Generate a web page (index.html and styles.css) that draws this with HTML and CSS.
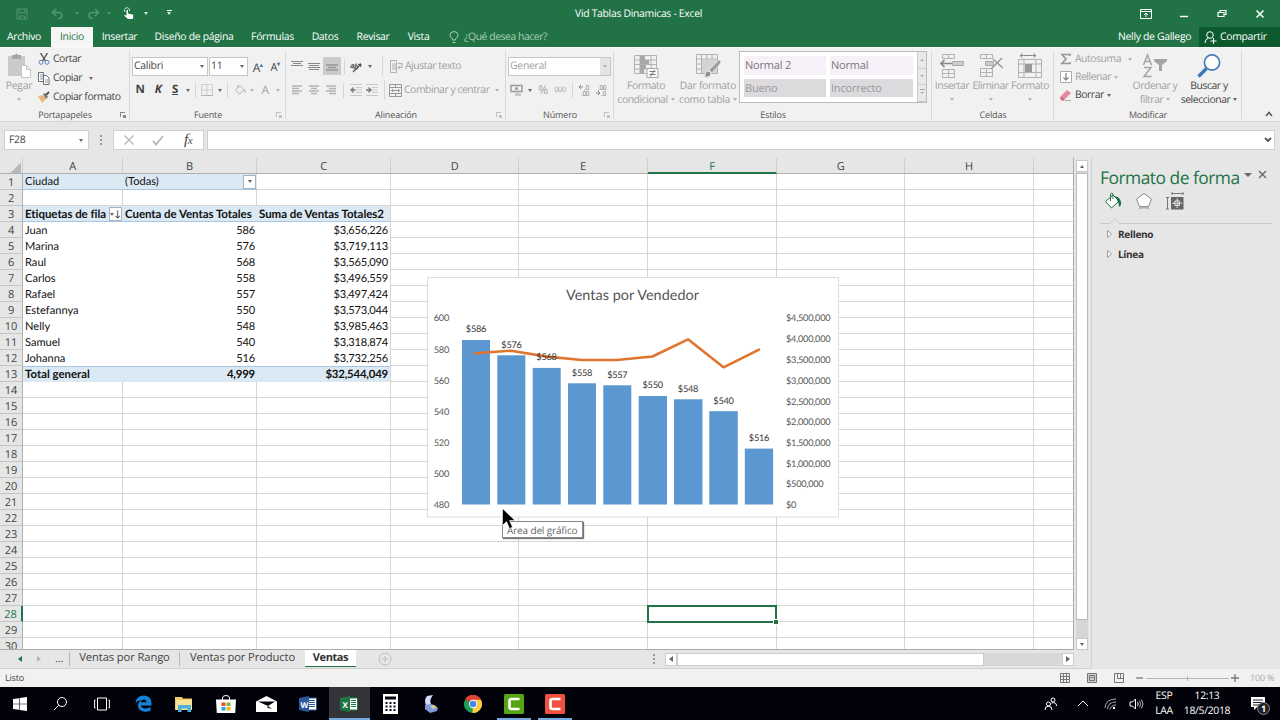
FILE: index.html
```html
<!DOCTYPE html>
<html lang="es">
  <head>
    <meta charset="UTF-8" />
    <meta name="viewport" content="width=device-width, initial-scale=1.0" />
    <title>Vid Tablas Dinamicas - Excel</title>
    <link rel="stylesheet" href="styles.css">
  </head>

  <body>
    <!--Barra de título-->
    <header class="titlebar">
      <div class="quick">
        <svg class="dim" width="12" height="12" viewBox="0 0 12 12"><path d="M1 1h10v10H1zM3 1v4h6V1M3.500 11V8h5v3" /></svg>
        <svg class="dim" width="13" height="12" viewBox="0 0 13 12"><path d="M5 1L1.500 4.500L5 8M2 4.500h6a3 3 0 0 1 0 6H7" stroke-width="1.600" /></svg>
        <i class="arrow dim-arrow"></i>
        <svg class="dim" width="13" height="12" viewBox="0 0 13 12"><path d="M8 1l3.500 3.500L8 8M11 4.500H5a3 3 0 0 0 0 6h1" stroke-width="1.600" /></svg>
        <i class="arrow dim-arrow"></i>
        <svg width="12" height="13" viewBox="0 0 12 13"><path d="M2 5a2.600 2.600 0 1 1 4.500-1" stroke="#d5eadc" fill="none" /><path d="M3.500 3.200q.8-1 1.500 0V6.500l4.500 1q1 .4.800 1.500L9.800 12H5L1 8.500q.8-1.200 2.500 0z" fill="#fff" /></svg>
        <i class="arrow"></i>
        <i class="arrow more"></i>
      </div>
      <div class="doc-title">Vid Tablas Dinamicas - Excel</div>
      <div class="win-buttons">
        <svg width="12" height="10" viewBox="0 0 12 10"><path d="M.5.500h11v9H.5zM.5 2.500h11M6 8V4.200M4 6l2-2 2 2" /></svg>
        <svg width="10" height="10" viewBox="0 0 10 10"><path d="M1 7.500h8" stroke-width="1.400" /></svg>
        <svg width="10" height="10" viewBox="0 0 10 10"><path d="M1 3.500h6v4H1zM3 3.500v-2h6v4H7" stroke-width="1.200" /></svg>
        <svg width="10" height="10" viewBox="0 0 10 10"><path d="M1.500 1.500l7 7M8.500 1.500l-7 7" stroke-width="1.500" /></svg>
      </div>
    </header>

    <!--Pestañas-->
    <nav class="tabs">
      <span class="tab">Archivo</span>
      <span class="tab active">Inicio</span>
      <span class="tab">Insertar</span>
      <span class="tab">Diseño de página</span>
      <span class="tab">Fórmulas</span>
      <span class="tab">Datos</span>
      <span class="tab">Revisar</span>
      <span class="tab">Vista</span>
      <span class="tell-me">
        <svg width="10" height="13" viewBox="0 0 10 13"><path d="M3.500 9V8Q1 6 1 4.500a4 4 0 0 1 8 0Q9 6 6.500 8v1zM3.500 11.500h3" /></svg>
        ¿Qué desea hacer?
      </span>
      <span class="user">Nelly de Gallego</span>
      <span class="share">
        <svg width="13" height="13" viewBox="0 0 13 13"><circle cx="6" cy="4" r="3.300" /><path d="M1 12q0-4 3.500-5M6.500 10h6M9.500 7v6" /></svg>
        Compartir
      </span>
    </nav>

    <!--Cinta de opciones-->
    <section class="ribbon">
      <div class="group clipboard">
        <div class="content">
          <div class="big off">
            <svg width="26" height="27" viewBox="0 0 26 27"><path d="M2 4h17v20H2z" fill="#cbc9cc" /><path d="M6 7V3h3q1-3 3 0h3v4z" fill="#a7a5a8" /><path d="M15.500 13.500h5l4 4v8h-9z" fill="#fff" stroke="#c4c2c4" /><path d="M20.500 13.500v4h4" fill="none" stroke="#c4c2c4" /></svg>
            <span>Pegar</span>
            <i class="arrow"></i>
          </div>
          <div class="stack">
            <div class="cmd"><svg width="12" height="12" viewBox="0 0 12 12"><path d="M2.500 0L7.500 8M9.500 0L4.500 8" stroke="#555" stroke-width="1.400" /><circle cx="3" cy="9.300" r="2" fill="none" stroke="#5a86bd" /><circle cx="9" cy="9.300" r="2" fill="none" stroke="#5a86bd" /></svg>Cortar</div>
            <div class="cmd"><svg width="12" height="13" viewBox="0 0 12 13"><path d="M.5.500h5v9h-5zM5.500 3.500h3l2.500 2.500v6.500H5.500z" fill="#fff" stroke="#707070" /><path d="M2 3h3M2 5h3M2 7h3M7 8h3M7 10h3" stroke="#7e9cc0" /></svg>Copiar<i class="arrow wide"></i></div>
            <div class="cmd"><svg width="12" height="12" viewBox="0 0 12 12"><path d="M0 5l5-1 3 4-4 4z" fill="#ecb878" /><path d="M5 3l2-1 3 4-2 2z" fill="#777" /><path d="M8 4l3-3" stroke="#555" stroke-width="2" /></svg>Copiar formato</div>
          </div>
        </div>
        <div class="caption">Portapapeles<i class="launch"></i></div>
      </div>

      <div class="group font">
        <div class="rows">
          <div class="row font-top">
            <div class="combo">Calibri<i class="arrow"></i></div>
            <div class="combo">11<i class="arrow"></i></div>
            <span class="glyph">A<b>▴</b></span>
            <span class="glyph small">A<b>▾</b></span>
          </div>
          <div class="row font-bottom">
            <b>N</b><b><em>K</em></b><b><u>S</u></b><i class="arrow"></i><i class="line"></i>
            <svg width="12" height="12" viewBox="0 0 12 12"><path d="M.5.500h11v11H.5zM6 .5v11M.5 6h11" class="thin" stroke-dasharray="1 1" /><path d="M0 11.500h12" class="thin" /></svg>
            <i class="arrow"></i><i class="line"></i>
            <svg width="13" height="12" viewBox="0 0 13 12"><path d="M1.500 6L6 1.500 10 6 5.500 10zM4 4V1" class="thin" /><path d="M10 5q3 2 1 5z" fill="#b5b3b5" /></svg>
            <i class="arrow pale"></i><span class="glyph pale-text">A</span><i class="arrow pale"></i>
          </div>
        </div>
        <div class="caption">Fuente<i class="launch pale"></i></div>
      </div>

      <div class="group align">
        <div class="rows">
          <div class="row align-top">
            <svg width="12" height="12" viewBox="0 0 12 12"><path d="M0 1.500h12M2 3.500h8M0 5.500h12" stroke="#888" /></svg>
            <svg width="12" height="12" viewBox="0 0 12 12"><path d="M0 3.500h12M1 5.500h10M0 7.500h12M1 9.500h10" stroke="#888" /></svg>
            <span class="pressed"><svg width="12" height="12" viewBox="0 0 12 12"><path d="M0 5h12M2 7.500h8M0 10h12" stroke="#999" stroke-width="1.600" /></svg></span>
            <i class="line"></i>
            <svg width="14" height="13" viewBox="0 0 14 13"><text x="1" y="8" transform="rotate(20 3 6)" class="tiny-bold">ab</text><path d="M4 12L12 4M12 4l-3 .5M12 4l-.5 3" stroke="#555" stroke-width="1.200" /></svg>
            <i class="arrow"></i><i class="line tall"></i>
            <svg width="13" height="13" viewBox="0 0 13 13"><path d="M.5.500h6v12h-6zM8 3.500h4v4H8M10 5.500L8 7.500l2 2" class="thin" /><path d="M2 3h4v7H2z" fill="#d2d2d2" /></svg>
            <span class="off">Ajustar texto</span>
          </div>
          <div class="row align-top align-bottom">
            <svg width="12" height="10" viewBox="0 0 12 10"><path d="M1 1h10M1 3.500h7M1 6h10M1 8.500h7" class="fat" /></svg>
            <svg width="12" height="10" viewBox="0 0 12 10"><path d="M1 1h10M3 3.500h6M1 6h10M3 8.500h6" class="fat" /></svg>
            <svg width="12" height="10" viewBox="0 0 12 10"><path d="M1 1h10M4 3.500h7M1 6h10M4 8.500h7" class="fat" /></svg>
            <i class="line"></i>
            <svg width="12" height="12" viewBox="0 0 12 12"><path d="M0 .5h12M6 3.500h6M6 6h6M6 8.500h6M0 11.500h12" stroke="#c9c9c9" /><path d="M5.500 6H1M3.500 3.500L1 6l2.500 2.500" stroke="#777" fill="none" stroke-width="1.300" /></svg>
            <svg width="12" height="12" viewBox="0 0 12 12"><path d="M0 .5h12M6 3.500h6M6 6h6M6 8.500h6M0 11.500h12" stroke="#c9c9c9" /><path d="M0 6h5M2.500 3.500L5 6 2.500 8.500" stroke="#777" fill="none" stroke-width="1.300" /></svg>
            <i class="line tall"></i>
            <svg width="13" height="13" viewBox="0 0 13 13"><path d="M.5.500h12v12H.5zM.5 3.500h12M.5 9.500h12M6.500.500v3M6.500 9.500v3M2.500 6.500h8M4 5L2.500 6.500 4 8M9 5l1.500 1.500L9 8" fill="none" stroke="#999" /></svg>
            <span class="off">Combinar y centrar</span><i class="arrow pale"></i>
          </div>
        </div>
        <div class="caption">Alineación<i class="launch pale"></i></div>
      </div>

      <div class="group number">
        <div class="rows">
          <div class="row"><div class="combo off general">General<i class="pick"><i class="arrow pale"></i></i></div></div>
          <div class="row number-bottom">
            <svg width="13" height="12" viewBox="0 0 13 12"><path d="M1 1.500h11v6H1z" fill="none" stroke="#999" stroke-width="1.400" /><circle cx="6.500" cy="4.500" r="1.500" fill="#999" /><path d="M5 9h6v3H5z" fill="#ccc" /></svg>
            <i class="arrow"></i><span class="off percent">%</span><span class="off zeros">000</span><i class="line"></i>
            <svg width="13" height="12" viewBox="0 0 13 12"><path d="M1 3h4M3 1L1 3l2 2" class="thin dark" /><text x="6" y="5.500" class="tiny">,0</text><text x="3" y="11.500" class="tiny">,00</text></svg>
            <svg width="13" height="12" viewBox="0 0 13 12"><text x="3" y="5.500" class="tiny">,00</text><path d="M1 9h4M3 7l2 2-2 2" class="thin dark" /><text x="6" y="11.500" class="tiny">,0</text></svg>
          </div>
        </div>
        <div class="caption">Número<i class="launch pale"></i></div>
      </div>

      <div class="group styles">
        <div class="content">
          <div class="big off">
            <svg width="26" height="26" viewBox="0 0 26 26"><path d="M1.500 2.500h22v18h-22zM1.500 7h22M1.500 11.500h22M1.500 16h22M7 2v18M18 2v18" class="thin" /><path d="M7 3h5v4H7zM7 7h9v4H7zM7 12h6v4H7zM7 16h4v4H7z" fill="#a9a7a9" /><path d="M14 15.500h11v9H14z" fill="#fafafa" stroke="#a8a6a8" /><path d="M16.500 18.500h6M16.500 21.500h6M21.500 17l-4 6.500" stroke="#777" /></svg>
            <span>Formato</span><span>condicional<i class="arrow"></i></span>
          </div>
          <div class="big off second">
            <svg width="26" height="26" viewBox="0 0 26 26"><path d="M1.500 1.500h21v19h-21zM1.500 6h21M1.500 11h21M1.500 16h21M6.500 1v19M12 1v19M17 1v19" class="thin" /><path d="M7 7h15v13H7z" fill="#d5d3d5" /><path d="M24 7q3 0 1 4l-8 9-3-3z" fill="#a09ea0" stroke="#f1f1f1" stroke-width=".6" /><path d="M13 18q3 0 3 3-1 4-8 3 3-1 2-3 1-3 3-3z" fill="#8f8d8f" stroke="#eee" /></svg>
            <span>Dar formato</span><span>como tabla<i class="arrow"></i></span>
          </div>
          <div class="gallery">
            <div class="swatches">
              <span>Normal 2</span><span>Normal</span>
              <span class="grey">Bueno</span><span class="grey">Incorrecto</span>
            </div>
            <div class="spin"><i><i class="arrow up"></i></i><i><i class="arrow"></i></i><i><i class="arrow more"></i></i></div>
          </div>
        </div>
        <div class="caption">Estilos</div>
      </div>

      <div class="group cells">
        <div class="content">
          <div class="big off">
            <svg width="26" height="26" viewBox="0 0 26 26"><path d="M3.500 1.500h12v4h-12zM9.500 1.500v4M3.500 16.500h12v8h-12zM9.500 16.500v8M3.500 20.500h12" class="thin" /><path d="M13.500 8.500h11v4h-11z" fill="#ccc" stroke="#aaa" /><path d="M13 10.500H2M5.500 7L2 10.500 5.500 14" stroke="#888" stroke-width="1.700" fill="none" /></svg>
            <span>Insertar</span><i class="arrow"></i>
          </div>
          <div class="big off">
            <svg width="26" height="26" viewBox="0 0 26 26"><path d="M2.500 1.500h12v4h-12zM8.500 1.500v4M2.500 15.500h12v8h-12zM8.500 15.500v8M2.500 19.500h12" class="thin" /><path d="M7.500 8.500h8v4h-8z" fill="#ccc" stroke="#aaa" /><path d="M15 6l10 9M24 5l-11 11" stroke="#999" stroke-width="1.500" /></svg>
            <span>Eliminar</span><i class="arrow"></i>
          </div>
          <div class="big off">
            <svg width="26" height="26" viewBox="0 0 26 26"><path d="M3 2.500h16M5.500.500L3 2.500l2.500 2M16.500.500l2.500 2-2.500 2" stroke="#888" fill="none" /><path d="M1.500 6.500h23v18h-23zM1.500 11h23M1.500 19.500h23M7 6.500v18M19 6.500v18" class="thin" /><path d="M8 11h7v8H8z" fill="#999" /></svg>
            <span>Formato</span><i class="arrow"></i>
          </div>
        </div>
        <div class="caption">Celdas</div>
      </div>

      <div class="group edit">
        <div class="content">
          <div class="stack">
            <div class="cmd off"><svg width="12" height="12" viewBox="0 0 12 12"><path d="M10 3V1.500H2L6 6l-4 4.500h8V9" stroke="#999" stroke-width="1.700" fill="none" /></svg>Autosuma<i class="arrow wide"></i></div>
            <div class="cmd off"><svg width="12" height="12" viewBox="0 0 12 12"><path d="M.5.500h11v11H.5z" fill="#fff" stroke="#aaa" /><path d="M6 2v7M3.500 6.500L6 9l2.500-2.500" stroke="#888" stroke-width="1.300" fill="none" /></svg>Rellenar<i class="arrow"></i></div>
            <div class="cmd"><svg width="12" height="12" viewBox="0 0 12 12"><path d="M1 7l6-6 4 3-6 6z" fill="#e58a9c" /><path d="M1 7l4 3-1 1.500H1.500L0 9z" fill="#d0667c" /><path d="M5 11.500h6" stroke="#aaa" /></svg>Borrar<i class="arrow"></i></div>
          </div>
          <div class="big off">
            <svg width="26" height="26" viewBox="0 0 26 26"><path d="M1.500 12L5.500 2l4 10M3 8.500h5M2 14.500h7L2 23.500h7.500" stroke="#a5a5a5" stroke-width="1.500" fill="none" /><path d="M12 6h13v2l-5 4v6h-3v-6l-5-4z" fill="#a5a3a5" /></svg>
            <span>Ordenar y</span><span>filtrar<i class="arrow"></i></span>
          </div>
          <div class="big find">
            <svg width="26" height="26" viewBox="0 0 26 26"><circle cx="16" cy="9.500" r="7.600" fill="#fff" stroke="#4a7ebb" stroke-width="1.700" /><path d="M10.500 15.500L2.500 23.500" stroke="#3d76bd" stroke-width="3.300" /></svg>
            <span>Buscar y</span><span>seleccionar<i class="arrow"></i></span>
          </div>
        </div>
        <div class="caption">Modificar</div>
      </div>
      <svg class="collapse" width="8" height="6" viewBox="0 0 8 6"><path d="M1 5l3-3.500L7 5" /></svg>
    </section>

    <!--Barra de fórmulas-->
    <section class="formula-bar">
      <div class="name-box">F28<i class="arrow"></i></div>
      <i class="dots"></i>
      <div class="fx-box">
        <svg width="12" height="12" viewBox="0 0 12 12"><path d="M1.500 1.500l9 9M10.500 1.500l-9 9" stroke="#b5b5b5" stroke-width="1.300" /></svg>
        <svg width="12" height="12" viewBox="0 0 12 12"><path d="M1 7l3 3.500L11 2" stroke="#b5b5b5" stroke-width="1.800" fill="none" /></svg>
        <span class="fx">f<small>x</small></span>
      </div>
      <div class="formula"><svg width="8" height="6" viewBox="0 0 8 6"><path d="M1 1l3 3 3-3" stroke="#555" stroke-width="1.800" fill="none" /></svg></div>
    </section>

    <main class="work">
      <section class="book">
        <div class="sheet">
          <div class="col-heads">
            <span class="corner"></span><span>A</span><span>B</span><span>C</span><span>D</span><span>E</span><span class="sel">F</span><span>G</span><span>H</span><span></span>
          </div>
          <div class="body">
            <div class="row-heads">
              <span>1</span><span>2</span><span>3</span><span>4</span><span>5</span><span>6</span><span>7</span><span>8</span><span>9</span><span>10</span>
              <span>11</span><span>12</span><span>13</span><span>14</span><span>15</span><span>16</span><span>17</span><span>18</span><span>19</span><span>20</span>
              <span>21</span><span>22</span><span>23</span><span>24</span><span>25</span><span>26</span><span>27</span><span class="sel">28</span><span>29</span><span>30</span>
            </div>
            <div class="cells-area">
              <!--Tabla dinámica-->
              <div class="pivot">
                <div class="prow filter"><span>Ciudad</span><span>(Todas)<i class="drop"><i class="arrow"></i></i></span><span class="blank"></span></div>
                <div class="prow empty"></div>
                <div class="prow head"><span>Etiquetas de fila<i class="drop"><i class="arrow"></i>↓</i></span><span>Cuenta de Ventas Totales</span><span>Suma de Ventas Totales2</span></div>
                <div class="prow"><span>Juan</span><span>586</span><span>$3,656,226</span></div>
                <div class="prow"><span>Marina</span><span>576</span><span>$3,719,113</span></div>
                <div class="prow"><span>Raul</span><span>568</span><span>$3,565,090</span></div>
                <div class="prow"><span>Carlos</span><span>558</span><span>$3,496,559</span></div>
                <div class="prow"><span>Rafael</span><span>557</span><span>$3,497,424</span></div>
                <div class="prow"><span>Estefannya</span><span>550</span><span>$3,573,044</span></div>
                <div class="prow"><span>Nelly</span><span>548</span><span>$3,985,463</span></div>
                <div class="prow"><span>Samuel</span><span>540</span><span>$3,318,874</span></div>
                <div class="prow"><span>Johanna</span><span>516</span><span>$3,732,256</span></div>
                <div class="prow total"><span>Total general</span><span>4,999</span><span>$32,544,049</span></div>
              </div>

              <!--Gráfico-->
              <svg class="chart" width="413" height="241" viewBox="427 277 413 241">
                <rect x="427.500" y="277.500" width="411" height="239.500" fill="#fff" stroke="#dedede" />
                <text x="632.500" y="300" class="chart-title">Ventas por Vendedor</text>
                <g class="axis left">
                  <text x="449" y="321">600</text><text x="449" y="352.500">580</text><text x="449" y="383.500">560</text><text x="449" y="414.500">540</text>
                  <text x="449" y="446">520</text><text x="449" y="477">500</text><text x="449" y="508">480</text>
                </g>
                <g class="axis">
                  <text x="786" y="321">$4,500,000</text><text x="786" y="342">$4,000,000</text><text x="786" y="363">$3,500,000</text><text x="786" y="383.500">$3,000,000</text>
                  <text x="786" y="404.500">$2,500,000</text><text x="786" y="425">$2,000,000</text><text x="786" y="446">$1,500,000</text><text x="786" y="466.500">$1,000,000</text>
                  <text x="786" y="487">$500,000</text><text x="786" y="508">$0</text>
                </g>
                <g class="bars">
                  <rect x="462" y="340" width="28" height="164.500" /><rect x="497.300" y="355.300" width="28" height="149.200" /><rect x="532.700" y="367.900" width="28" height="136.600" />
                  <rect x="568" y="383.300" width="28" height="121.200" /><rect x="603.300" y="385.300" width="28" height="119.200" /><rect x="638.700" y="396" width="28.300" height="108.500" />
                  <rect x="674" y="399.300" width="28.500" height="105.200" /><rect x="709.300" y="411.200" width="28.500" height="93.300" /><rect x="744.800" y="448.600" width="28.300" height="55.900" />
                </g>
                <polyline points="475,353.300 511,350.700 547,356.600 582,360 617,360 652.500,356.500 688,339.300 723.500,367.300 759,349.700" />
                <g class="axis mid">
                  <text x="476" y="332">$586</text><text x="511.500" y="347.500">$576</text><text x="546.500" y="360">$568</text><text x="582" y="375.500">$558</text><text x="617.300" y="377.500">$557</text>
                  <text x="652.700" y="388">$550</text><text x="688" y="391.500">$548</text><text x="723.500" y="403.500">$540</text><text x="759" y="441">$516</text>
                </g>
              </svg>

              <div class="selection"></div>
              <div class="tooltip">Área del gráfico</div>
              <svg class="cursor" width="14" height="22" viewBox="0 0 14 22"><path d="M.5.500v17l4-4 3 7 3-1.200-3-6.800h5.500z" fill="#000" stroke="#fff" stroke-width=".6" /></svg>
            </div>
          </div>
        </div>
        <div class="vscroll"><i><i class="arrow up"></i></i><b></b><i><i class="arrow"></i></i></div>

        <!--Hojas-->
        <div class="sheet-bar">
          <div class="sheet-nav"><i class="tri left"></i><i class="tri right"></i><span>…</span></div>
          <span class="sheet-tab">Ventas por Rango</span>
          <span class="sheet-tab wide">Ventas por Producto</span>
          <span class="sheet-tab current">Ventas</span>
          <svg class="add" width="14" height="14" viewBox="0 0 14 14"><circle cx="7" cy="7" r="6" /><path d="M7 4v6M4 7h6" /></svg>
          <i class="dots"></i>
          <div class="hscroll"><i><i class="tri left"></i></i><b></b><i><i class="tri right"></i></i></div>
        </div>
      </section>

      <!--Panel de formato-->
      <aside class="pane">
        <div class="pane-title">Formato de forma<i class="arrow"></i>
          <svg width="9" height="9" viewBox="0 0 9 9"><path d="M1 1l7 7M8 1L1 8" stroke="#666" stroke-width="1.400" /></svg>
        </div>
        <div class="pane-icons">
          <svg width="18" height="18" viewBox="0 0 18 18"><path d="M1.500 9.500L9 3l6 6-7.500 7z" fill="#fff" stroke="#217346" /><path d="M6.500 9V2q1.500-2 2.500 0v5" fill="none" stroke="#217346" /><path d="M11 4q7 2 6 9l-2 2q0-3-1-5z" fill="#217346" /></svg>
          <svg width="18" height="18" viewBox="0 0 18 18"><path d="M9 1.500l7.500 5.500-3 7.500h-9L1.500 7z" fill="#fff" stroke="#888" /><path d="M4 15.500q5-2 10 0v2q-5-2-10 0z" fill="#b5b5b5" /></svg>
          <svg width="18" height="18" viewBox="0 0 18 18"><path d="M6 1.500h11M6 0v3M17 0v3M1.500 5v12M0 5.500h3M0 17h3" stroke="#777" /><path d="M5 5h12.500v12.500H5z" fill="#666" /><path d="M11.200 6.500v9.500M6.500 11.200H16" stroke="#fff" stroke-dasharray="3 1" /><path d="M9 9h4.500v4.500H9z" fill="none" stroke="#fff" stroke-width=".8" /></svg>
        </div>
        <svg class="notch" width="172" height="7" viewBox="0 0 172 7"><path d="M0 6.500h10l5-5 5 5h152" /></svg>
        <div class="pane-item"><svg width="5" height="8" viewBox="0 0 5 8"><path d="M.5.500L4.500 4l-4 3.500z" /></svg>Relleno</div>
        <div class="pane-item"><svg width="5" height="8" viewBox="0 0 5 8"><path d="M.5.500L4.500 4l-4 3.500z" /></svg>Línea</div>
      </aside>
    </main>

    <!--Barra de estado-->
    <footer class="status">
      <span>Listo</span>
      <div class="views">
        <svg width="10" height="10" viewBox="0 0 10 10"><path d="M.5.500h9v9h-9zM.5 3.500h9M.5 6.500h9M3.500.500v9M6.500.500v9" /></svg>
        <svg width="10" height="10" viewBox="0 0 10 10"><path d="M.5.500h9v9h-9zM2.500 2.500h5v5h-5zM3.500 4.500h3" fill="#ccc" /></svg>
        <svg width="10" height="10" viewBox="0 0 10 10"><path d="M.5.500h9v9h-9zM3.500.500v5M6.500.500v5M3.500 5.500h6" /></svg>
        <svg class="zoom" width="103" height="10" viewBox="0 0 103 10"><path d="M0 5h7" stroke-width="1.300" /><path d="M10 5.500h83M51.500 3v5" stroke="#b5b5b5" /><path d="M95 5h8M99 1v8" stroke-width="1.300" /></svg>
        <span class="percent-zoom">100 %</span>
      </div>
    </footer>

    <!--Barra de tareas-->
    <footer class="taskbar">
      <div class="apps">
        <span><svg width="14" height="14" viewBox="0 0 14 14"><path d="M0 2l6-.8v5.500H0zM6.600 1.100L14 0v6.700H6.600zM0 7.300h6v5.500L0 12zM6.600 7.300H14V14l-7.400-1z" fill="#fff" /></svg></span>
        <span><svg width="15" height="15" viewBox="0 0 15 15"><circle cx="9" cy="6" r="4.500" class="w" /><path d="M5.700 9.300L1 14" class="w" /></svg></span>
        <span><svg width="16" height="14" viewBox="0 0 16 14"><path d="M3.500 1h9v12h-9zM1.500 3H.6v8h.9M14.500 3h.9v8h-.9" class="w" /></svg></span>
        <span><svg width="17" height="17" viewBox="0 0 17 17"><path d="M.5 8Q1.500.500 9 .5q7.500.5 7.500 8v2H6q.5 3 4 3 3 0 5.500-1.500v3.700Q13 16.800 9.500 16.700 3 16 3 10.500 3 7 6.500 5.300 3 5 .5 8zM6 7.300h5.500Q11.500 4.500 9 4.500T6 7.300z" fill="#1583d8" fill-rule="evenodd" /></svg></span>
        <span><svg width="18" height="16" viewBox="0 0 18 16"><path d="M0 1h7l1 1.500h9V14H0z" fill="#f0cc68" /><path d="M1 4h16v10H1z" fill="#fae39b" /><path d="M3 16V9h13v7h-3.500v-3.500h-6V16z" fill="#4fb3d9" /></svg></span>
        <span><svg width="20" height="18" viewBox="0 0 20 18"><path d="M6.500 5V3q0-2.500 3.500-2.500T13.500 3v2" class="w" /><path d="M0 4.500h20l-.8 13.500H.8z" fill="#fff" /><path d="M5.500 7.500h4v3.500h-4z" fill="#e8502f" /><path d="M10.500 7.500h4v3.500h-4z" fill="#79b72f" /><path d="M5.500 12h4v3.500h-4z" fill="#2ba0e5" /><path d="M10.500 12h4v3.500h-4z" fill="#f5b51d" /></svg></span>
        <span><svg width="21" height="16" viewBox="0 0 21 16"><path d="M0 5.500L10.500 0 21 5.500V16H0z" fill="#fff" /><path d="M2 5.500h17l-7 4.500z" fill="#05060c" /><path d="M12 10l4 3-5-1.500z" fill="#05060c" /></svg></span>
        <span><svg width="18" height="16" viewBox="0 0 18 16"><path d="M9 2h8.500v12H9z" fill="#fff" stroke="#2b579a" /><path d="M10 4.500h6M10 6.500h6M10 8.500h6M10 10.500h6" stroke="#2b579a" /><path d="M0 2l10-2v16L0 14z" fill="#2b579a" /><text x="1.500" y="11.500" class="letter">W</text></svg></span>
        <span class="on"><svg width="18" height="16" viewBox="0 0 18 16"><path d="M9 2h8.500v12H9z" fill="#fff" stroke="#217346" /><path d="M11 4.500h5M11 6.500h5M11 8.500h5M11 10.500h5" stroke="#217346" /><path d="M0 2l10-2v16L0 14z" fill="#217346" /><text x="2.500" y="11.500" class="letter">X</text></svg></span>
        <span><svg width="15" height="20" viewBox="0 0 15 20"><path d="M0 0h15v20H0z" fill="#fff" /><path d="M2 2.500h11v3H2z" fill="#05060c" /><path d="M2.500 9h10M2.500 12.500h10M2.500 16h10" stroke="#05060c" stroke-width="2" stroke-dasharray="2 2" /></svg></span>
        <span><svg width="18" height="18" viewBox="0 0 18 18"><path d="M5 1l6-1Q7 5 9 9l-4 3Q1 6 5 1z" fill="#d3daf5" /><path d="M3 10l7-1 6 4-1 3-7 2-5-4z" fill="#7f9bdc" /><path d="M8 11l4-1 3 2-4 2z" fill="#d6cf8f" /></svg></span>
        <span><svg width="18" height="18" viewBox="0 0 18 18"><path d="M9 9L1.200 4.500A9 9 0 0 1 16.800 4.500z" fill="#dc4437" /><path d="M9 9L1.200 4.500A9 9 0 0 0 8.500 18L12 11z" fill="#1b9c58" /><path d="M9 9L8.500 18A9 9 0 0 0 16.800 4.500H9z" fill="#ffcd42" /><path d="M1.200 4.500A9 9 0 0 1 16.800 4.500H9v3z" fill="#dc4437" /><circle cx="9" cy="9" r="4.200" fill="#fff" /><circle cx="9" cy="9" r="3.300" fill="#4a86ea" /></svg></span>
        <span class="open"><svg width="20" height="20" viewBox="0 0 20 20"><rect width="20" height="20" rx="1.500" fill="#57a512" /><path d="M15.500 5H7.500Q5.500 5 5.500 7v6q0 2 2 2h8" stroke="#fff" stroke-width="2.600" fill="none" /></svg></span>
        <span class="open"><svg width="20" height="20" viewBox="0 0 20 20"><rect width="20" height="20" rx="1.500" fill="#f0523f" /><path d="M15.500 5H7.500Q5.500 5 5.500 7v6q0 2 2 2h8" stroke="#fff" stroke-width="2.600" fill="none" /></svg></span>
      </div>
      <div class="tray">
        <svg width="13" height="14" viewBox="0 0 13 14"><circle cx="4.500" cy="7" r="2" class="w" /><path d="M1 13q0-4 3.500-4T8 13" class="w" /><circle cx="9" cy="3" r="2" class="w" /><path d="M7.500 6q5-1.500 5 3" class="w" /></svg>
        <svg width="12" height="7" viewBox="0 0 12 7"><path d="M1 6l5-5 5 5" class="w" /></svg>
        <svg width="13" height="13" viewBox="0 0 13 13"><path d="M1 11Q1.500 2 12 2M3.500 12Q4 5 12 5M6 12.500Q7 8 12 8" class="w faint" /><circle cx="10" cy="11" r="1.200" fill="#fff" /></svg>
        <svg width="15" height="12" viewBox="0 0 15 12"><path d="M1 4h2.500l3-3v10l-3-3H1zM8.500 4q1.500 2 0 4" class="w" /><path d="M10.500 2.500q2.500 3.500 0 7M12.500 1.500q3 4.500 0 9" class="w faint" /></svg>
        <div class="two">ESP<br>LAA</div>
        <div class="two clock">12:13<br>18/5/2018</div>
        <div class="notes"><svg width="14" height="14" viewBox="0 0 14 14"><path d="M0 0h14v10H6l-3 3v-3H0z" fill="#fff" /><path d="M2 3h10M2 5.500h10M2 8h6" stroke="#222" /></svg><b>1</b></div>
      </div>
    </footer>
  </body>
</html>
```
FILE: styles.css
```css
* {
  box-sizing: border-box;
}

body {
  width: 1280px;
  height: 720px;
  margin: 0;
  overflow: hidden;
  display: flex;
  flex-direction: column;
  background-color: #e6e6e6;
  color: #444;
  font-family: "Open Sans", "Noto Sans", sans-serif;
  font-size: 10.4px;
  letter-spacing: -0.3px;
  line-height: 14px;
  white-space: nowrap;
  text-rendering: geometricPrecision;
}

svg {
  display: block;
  flex: none;
}

i {
  font-style: normal;
}

.arrow {
  display: inline-block;
  flex: none;
  border: 2.5px solid transparent;
  border-top: 3px solid #666;
  border-bottom: 0;
}

.arrow.up {
  border-top: 0;
  border-bottom: 3px solid #666;
}

.off .arrow,
.arrow.pale {
  border-top-color: #b5b5b5;
}

.thin {
  fill: none;
  stroke: #b3b1b3;
}

.thin.dark {
  stroke: #888;
}

.fat {
  stroke: #b3b3b3;
  stroke-width: 1.6;
}

.tiny {
  font-size: 6.5px;
  letter-spacing: -0.3px;
  fill: #777;
}

.tiny-bold {
  font-size: 7.5px;
  font-weight: bold;
  fill: #555;
}

.off {
  color: #a19fa1;
}

/* Barra de título */
.titlebar {
  height: 27px;
  flex: none;
  display: grid;
  grid-template-columns: 200px 1fr 162px;
  align-items: center;
  background-color: #217346;
  color: #fff;
}

.quick {
  display: grid;
  grid-template-columns: 43px 28px 12px 20px 12px 28px 5px 42px;
  justify-items: center;
  align-items: center;
}

.quick > :first-child {
  justify-self: end;
  margin-right: 15px;
}

.quick .arrow {
  border-top-color: #d9ebe0;
}

.quick .dim {
  fill: none;
  stroke: #559470;
}

.quick .dim-arrow {
  border-top-color: #559470;
}

.doc-title {
  text-align: center;
  margin-right: 41px;
}

.win-buttons {
  display: grid;
  grid-template-columns: repeat(4, 38px);
  margin-left: 9px;
  justify-items: center;
}

.win-buttons svg {
  fill: none;
  stroke: #fff;
}

/* Pestañas */
.tabs {
  height: 20px;
  flex: none;
  display: grid;
  grid-template-columns: 51px 42px 53px 96px 61px 44px 52px 39px 1fr 81px 81px;
  align-items: stretch;
  line-height: 21px;
  background-color: #217346;
  color: #fff;
}

.tab {
  text-align: center;
}

.tab:first-child {
  padding-right: 3px;
}

.active {
  background-color: #f5f5f5;
  color: #217346;
}

.tell-me {
  display: flex;
  align-items: center;
  gap: 5px;
  padding-left: 11px;
  letter-spacing: -0.45px;
  color: #a9cdb8;
}

.tell-me svg {
  fill: none;
  stroke: #a9cdb8;
}

.share {
  display: flex;
  align-items: center;
  gap: 3px;
  padding-left: 5px;
  background-color: #0e5a2f;
}

.share svg {
  fill: none;
  stroke: #fff;
}

/* Cinta de opciones */
.ribbon {
  height: 75px;
  flex: none;
  display: flex;
  border-bottom: 1px solid #d4d4d4;
  border-top: 1px solid #fafafa;
  background-color: #f1f1f1;
  letter-spacing: -0.45px;
}

.group {
  display: flex;
  flex-direction: column;
  position: relative;
}

.group::after {
  content: "";
  position: absolute;
  right: 0;
  top: 3px;
  bottom: 2px;
  width: 1px;
  background-color: #d8d8d8;
}

.clipboard {
  width: 130px;
}

.font {
  width: 156px;
}

.align {
  width: 220px;
}

.number {
  width: 108px;
}

.styles {
  width: 318px;
}

.cells {
  width: 122px;
}

.edit {
  width: 188px;
}

.content,
.rows {
  height: 60px;
  display: flex;
}

.rows {
  flex-direction: column;
  padding-top: 8px;
  gap: 4px;
}

.caption {
  display: flex;
  justify-content: center;
  font-size: 9px;
  line-height: 13px;
  letter-spacing: -0.15px;
  color: #555;
  position: relative;
}

.launch {
  position: absolute;
  right: 5px;
  top: 4px;
  width: 5px;
  height: 5px;
  border: 1px solid #888;
  border-right: 0;
  border-bottom: 0;
}

.launch::after {
  content: "";
  position: absolute;
  left: 2px;
  top: 2px;
  width: 3px;
  height: 3px;
  background-color: #888;
}

.launch.pale {
  opacity: 0.45;
}

.big {
  display: flex;
  flex-direction: column;
  align-items: center;
  padding-top: 5px;
  line-height: 13.5px;
}

.big svg {
  margin-bottom: 1px;
}

.big > .arrow {
  margin-top: 4px;
}

.big span .arrow {
  margin: 0 0 2px 3px;
}

.clipboard .big {
  width: 38px;
  padding-top: 4px;
  letter-spacing: -0.25px;
}

.stack {
  display: flex;
  flex-direction: column;
  padding-top: 2px;
}

.cmd {
  height: 18.7px;
  display: flex;
  align-items: center;
  gap: 3px;
}

.cmd .wide {
  margin-left: 4px;
}

.row {
  height: 20px;
  display: grid;
  align-items: center;
  justify-items: center;
}

.combo {
  height: 19px;
  width: 100%;
  display: flex;
  align-items: center;
  justify-content: space-between;
  padding: 0 3px 0 1px;
  border: 1px solid #c6c6c6;
  background-color: #fff;
  letter-spacing: -0.25px;
}

.font-top {
  grid-template-columns: 76px 39px 17px 16px;
  column-gap: 1px;
  padding-left: 2px;
}

.glyph {
  font-size: 12px;
}

.glyph.small {
  font-size: 11px;
}

.glyph b {
  font-size: 6px;
  color: #4472a8;
  vertical-align: 5px;
}

.glyph.pale-text {
  color: #a5a3a5;
}

.font-bottom {
  grid-template-columns: 18px 18px 16px 10px 4px 20px 6px 8px 18px 6px 20px 6px;
  padding-left: 1px;
  font-size: 11.5px;
  height: 30px;
  margin-top: -5px;
}

.line {
  width: 1px;
  height: 15px;
  background-color: #d5d5d5;
}

.line.tall {
  height: 20px;
}

.align-top {
  grid-template-columns: 17px 17px 20px 4px 20px 8px 16px 13px auto;
  justify-content: start;
  padding-left: 2px;
}

.align-top .off {
  margin-left: 2px;
}

.align-bottom {
  grid-template-columns: 17px 17px 18px 6px 19px 14px 10px 13px auto 16px;
  height: 30px;
  margin-top: -5px;
}

.pressed {
  width: 18px;
  height: 18px;
  display: grid;
  place-items: center;
  background-color: #cbcbcb;
}

.number .row {
  padding: 0 3px 0 2px;
}

.general {
  padding-right: 0;
}

.pick {
  width: 10px;
  height: 17px;
  display: grid;
  place-items: center;
  background-color: #e4e4e4;
}

.number .number-bottom {
  grid-template-columns: 17px 10px 16px 18px 6px 18px 16px;
  padding: 0;
  justify-content: start;
  padding-left: 2px;
  height: 30px;
  margin-top: -5px;
}

.percent {
  font-size: 12px;
}

.zeros {
  font-size: 7.5px;
}

.styles .big {
  width: 62px;
  margin-left: 1px;
}

.styles .second {
  width: 60px;
  letter-spacing: -0.3px;
}

.gallery {
  width: 188px;
  height: 52px;
  margin: 3px 0 0 1px;
  display: flex;
  border: 1px solid #bbb;
  background-color: #fff;
}

.swatches {
  flex: 1;
  display: grid;
  grid-template-columns: 82px 83px;
  grid-template-rows: 19px 18px;
  gap: 4px;
  padding: 4px;
  line-height: 19px;
  font-size: 11px;
  letter-spacing: -0.2px;
  color: #7b777b;
}

.swatches span {
  padding-left: 1px;
  background-color: #f8f0f8;
}

.swatches .grey {
  background-color: #dcdadd;
  color: #9a989b;
}

.spin {
  width: 12px;
  display: grid;
  grid-template-rows: 1fr 1fr 1fr;
  background-color: #e9e9e9;
  border-left: 1px solid #ccc;
  color: #aaa;
}

.spin > i {
  display: grid;
  place-items: center;
  border-bottom: 1px solid #ccc;
}

.spin .arrow {
  border-width: 2px;
  border-bottom-width: 0;
  border-top-color: #aaa;
}

.spin .up {
  border-top-width: 0;
  border-bottom: 2px solid #aaa;
}

.more {
  position: relative;
}

.more::before {
  content: "";
  position: absolute;
  left: -2.5px;
  top: -5px;
  width: 5px;
  height: 1px;
  background-color: currentColor;
}

.cells .content {
  display: grid;
  grid-template-columns: 38px 39px 40px;
  justify-content: start;
  justify-items: center;
  padding-left: 1px;
}

.edit .stack {
  width: 76px;
  padding: 2px 0 0 6px;
}

.edit .cmd {
  height: 18px;
}

.edit .big {
  width: 50px;
}

.edit .find {
  width: 58px;
}

.collapse {
  align-self: flex-end;
  margin: 0 0 4px 23px;
  fill: none;
  stroke: #555;
  stroke-width: 1.5;
}

/* Barra de fórmulas */
.formula-bar {
  height: 36px;
  flex: none;
  display: flex;
  align-items: center;
  padding: 0 5px 0 4px;
}

.name-box,
.fx-box,
.formula {
  height: 20px;
  display: flex;
  align-items: center;
  border: 1px solid #d0d0d0;
  background-color: #fff;
}

.name-box {
  width: 85px;
  justify-content: space-between;
  padding: 0 5px 0 4px;
}

.dots {
  width: 2px;
  height: 10px;
  background-image: linear-gradient(#999 50%, transparent 50%);
  background-size: 2px 4px;
}

.name-box + .dots {
  margin: 0 11px;
}

.fx-box {
  width: 91px;
  display: grid;
  grid-template-columns: 1fr 1fr 1fr;
  justify-items: center;
}

.fx {
  font-family: "Liberation Serif", serif;
  font-style: italic;
  font-size: 15px;
}

.fx small {
  font-size: 11px;
}

.formula {
  flex: 1;
  margin-left: 3px;
  justify-content: flex-end;
  padding-right: 2px;
}

/* Libro */
.work {
  height: 511px;
  flex: none;
  display: flex;
}

.book {
  width: 1091px;
  display: grid;
  grid-template-columns: 1074px 17px;
  grid-template-rows: 492px 19px;
}

.sheet {
  overflow: hidden;
  border-right: 1px solid #ababab;
  border-bottom: 1px solid #ababab;
}

.col-heads {
  height: 16px;
  display: grid;
  grid-template-columns: 23px 100px 134px 134px 128px 129px 129px 128px 129px 40px;
  border-bottom: 1px solid #b0b0b0;
  font-size: 11px;
  line-height: 17px;
  text-align: center;
}

.col-heads span {
  height: 15px;
  border-right: 1px solid #cfcfcf;
}

.col-heads .sel {
  height: 16px;
  border-bottom: 2px solid #217346;
  color: #217346;
}

.corner {
  background: linear-gradient(135deg, transparent 50%, #b8b8b8 50%) 11px 5px / 10px 10px no-repeat;
}

.body {
  display: flex;
}

.row-heads {
  width: 23px;
  flex: none;
  font-size: 11px;
  letter-spacing: -0.1px;
  line-height: 17px;
  text-align: center;
  border-right: 1px solid #b0b0b0;
}

.row-heads span {
  display: block;
  height: 16px;
  border-bottom: 1px solid #c6c6c6;
}

.row-heads .sel {
  margin-right: -1px;
  border-right: 2px solid #217346;
  color: #217346;
}

.cells-area {
  position: relative;
  flex: 1;
  height: 480px;
  background-color: #fff;
  background-image:
    linear-gradient(#d6d6d6, #d6d6d6), linear-gradient(#d6d6d6, #d6d6d6),
    linear-gradient(#d6d6d6, #d6d6d6), linear-gradient(#d6d6d6, #d6d6d6),
    linear-gradient(#d6d6d6, #d6d6d6), linear-gradient(#d6d6d6, #d6d6d6),
    linear-gradient(#d6d6d6, #d6d6d6), linear-gradient(#d6d6d6, #d6d6d6),
    linear-gradient(transparent 15px, #d6d6d6 15px);
  background-size:
    1px 100%, 1px 100%, 1px 100%, 1px 100%,
    1px 100%, 1px 100%, 1px 100%, 1px 100%, 100% 16px;
  background-position:
    99px 0, 233px 0, 367px 0, 495px 0,
    624px 0, 753px 0, 881px 0, 1010px 0, 0 0;
  background-repeat:
    no-repeat, no-repeat, no-repeat, no-repeat,
    no-repeat, no-repeat, no-repeat, no-repeat, repeat;
}

.pivot {
  width: 367px;
  font-family: Lato, "Open Sans", sans-serif;
  font-size: 11.1px;
  letter-spacing: 0;
  line-height: 16px;
  color: #111;
}

.prow {
  height: 16px;
  display: grid;
  grid-template-columns: 100px 134px 133px;
  background-color: #fff;
}

.prow span {
  height: 16px;
  display: flex;
  align-items: center;
  padding: 1px 2px 0;
}

.prow span:not(:first-child) {
  justify-content: flex-end;
  letter-spacing: -0.2px;
}

.prow.empty {
  background: none;
}

.prow.filter {
  background: none;
}

.prow.filter span:not(.blank) {
  background-color: #dbe9f4;
  justify-content: space-between;
  border-bottom: 1px solid #a9c6e2;
  letter-spacing: 0;
}

.prow.head,
.prow.total {
  background-color: #dbe9f4;
  font-weight: bold;
}

.prow.head {
  border-bottom: 1px solid #a9c6e2;
  font-size: 11.5px;
}

.prow.head span {
  justify-content: space-between;
  letter-spacing: -0.05px;
}

.prow.total {
  border-top: 1px solid #a9c6e2;
  font-size: 11.4px;
}

.prow.total span {
  margin-top: -1px;
}

.drop {
  width: 13px;
  height: 14px;
  display: flex;
  align-items: center;
  justify-content: center;
  margin: -1px -1px 0 0;
  border: 1px solid #aab4c0;
  background-color: #fff;
  font-size: 9px;
  font-weight: normal;
}

.chart {
  position: absolute;
  left: 404px;
  top: 103px;
  font-family: Lato, "Open Sans", sans-serif;
}

.chart-title {
  font-size: 14.4px;
  letter-spacing: 0.05px;
  text-anchor: middle;
  fill: #555;
}

.axis {
  font-size: 9.2px;
  letter-spacing: -0.25px;
  fill: #555;
}

.axis.left {
  text-anchor: end;
}

.axis.mid {
  text-anchor: middle;
  fill: #333;
}

.bars {
  fill: #5b97d1;
}

.chart polyline {
  fill: none;
  stroke: #e0752f;
  stroke-width: 2.6;
  stroke-linejoin: round;
  stroke-linecap: round;
}

.selection {
  position: absolute;
  left: 624px;
  top: 431px;
  width: 130px;
  height: 18px;
  border: 2px solid #217346;
}

.selection::after {
  content: "";
  position: absolute;
  right: -3px;
  bottom: -3px;
  width: 4px;
  height: 4px;
  background-color: #217346;
  outline: 1px solid #fff;
}

.tooltip {
  position: absolute;
  left: 479px;
  top: 347px;
  width: 81px;
  height: 17px;
  padding-left: 4px;
  line-height: 16px;
  letter-spacing: -0.15px;
  font-size: 10px;
  color: #666;
  border: 1px solid #888;
  background-color: #fff;
  box-shadow: 1px 1px 1px #777;
}

.cursor {
  position: absolute;
  left: 479px;
  top: 334px;
}

.vscroll {
  display: grid;
  grid-template-rows: 12px 1fr 12px;
  margin: 2px 3px 0 2px;
  background-color: #d6d6d6;
}

.vscroll > * {
  display: grid;
  place-items: center;
  border: 1px solid #c9c9c9;
  background-color: #fff;
}

.vscroll b {
  margin: 1px 0 18px;
  border-color: #bbb;
}

.sheet-bar {
  grid-column: 1 / 3;
  display: flex;
  align-items: center;
  font-size: 11px;
  letter-spacing: 0;
  border-bottom: 1px solid #d0d0d0;
}

.tri {
  display: inline-block;
  border: 3px solid transparent;
}

.tri.left {
  border-right: 4px solid #666;
  border-left: 0;
}

.tri.right {
  border-left: 4px solid #666;
  border-right: 0;
}

.sheet-nav {
  width: 70px;
  height: 14px;
  padding-left: 18px;
  display: flex;
  align-items: center;
  gap: 15px;
  border-right: 1px solid #b5b5b5;
}

.sheet-nav .left {
  border-right-color: #217346;
}

.sheet-nav .right {
  border-left-color: #b5b5b5;
}

.sheet-nav span {
  margin-left: -1px;
}

.sheet-tab {
  width: 110px;
  height: 14px;
  line-height: 12px;
  text-align: center;
  border-right: 1px solid #b5b5b5;
  font-size: 11.2px;
  letter-spacing: -0.1px;
}

.sheet-tab.wide {
  width: 125px;
  border: 0;
}

.sheet-tab.current {
  width: 51px;
  height: 17px;
  line-height: 15px;
  align-self: flex-start;
  font-weight: bold;
  font-size: 11px;
  letter-spacing: -0.4px;
  color: #333;
  background-color: #fff;
  border-right: 0;
  border-bottom: 1px solid #217346;
}

.add {
  margin-left: 22px;
  fill: none;
  stroke: #bdbdbd;
}

.sheet-bar .dots {
  margin-left: 261px;
}

.hscroll {
  width: 409px;
  height: 13px;
  margin-left: 10px;
  display: grid;
  grid-template-columns: 12px 307px 12px;
  justify-content: space-between;
  background-color: #d8d8d8;
}

.hscroll > * {
  display: grid;
  place-items: center;
  border: 1px solid #ccc;
  background-color: #fff;
}

.hscroll b {
  margin-right: auto;
  width: 307px;
  margin-left: -39px;
}

/* Panel */
.pane {
  width: 189px;
  border-left: 1px solid #d2d2d2;
  padding: 8px 8px 0;
}

.pane-title {
  height: 24px;
  display: flex;
  align-items: flex-start;
  font-size: 17.4px;
  line-height: 25px;
  letter-spacing: -0.5px;
  color: #217346;
}

.pane-title .arrow {
  margin: 7px 6px 0 auto;
  border-width: 4px 4px 0;
}

.pane-title svg {
  margin: 4px 5px 0 0;
}

.pane-icons {
  display: flex;
  gap: 13px;
  padding: 2px 0 0 4px;
}

.notch {
  margin: 7px 0 0;
  fill: none;
  stroke: #c9c9c9;
}

.pane-item {
  height: 20px;
  margin-left: 7px;
  display: flex;
  align-items: center;
  gap: 6px;
  padding-top: 2px;
  font-size: 10px;
  font-weight: bold;
  color: #333;
}

.notch + .pane-item {
  margin-top: -1px;
}

.pane-item svg {
  fill: #fff;
  stroke: #999;
}

/* Barra de estado */
.status {
  height: 18px;
  flex: none;
  display: flex;
  align-items: center;
  justify-content: space-between;
  padding: 0 6px 0 5px;
  background-color: #f1f1f1;
  font-size: 9px;
  letter-spacing: -0.2px;
}

.views {
  display: flex;
  align-items: center;
}

.views svg {
  margin-right: 17px;
  fill: none;
  stroke: #777;
}

.views .zoom {
  margin: 0 11px 0 -5px;
}

.percent-zoom {
  width: 24px;
  color: #aaa;
}

/* Barra de tareas */
.taskbar {
  height: 33px;
  flex: none;
  display: flex;
  justify-content: space-between;
  background-color: #02030a;
  color: #fff;
}

.w {
  fill: none;
  stroke: #fff;
}

.w.faint {
  stroke: #aaa;
}

.letter {
  font-size: 8px;
  font-weight: bold;
  fill: #fff;
}

.apps {
  margin-left: -1px;
  display: grid;
  grid-template-columns: repeat(14, 41.2px);
}

.apps span {
  display: grid;
  place-items: center;
}

.apps .on {
  background-color: #333439;
  border-bottom: 2px solid #76a9de;
  padding-top: 2px;
}

.apps .open {
  margin: 0 3.5px;
  padding-top: 2px;
  border-bottom: 2px solid #76a9de;
}

.tray {
  width: 237px;
  display: grid;
  grid-template-columns: 14px 52px 2px 50px 6px 80px 22px;
  align-items: center;
  justify-items: center;
}

.two {
  line-height: 15px;
  text-align: center;
}

.notes {
  position: relative;
}

.notes b {
  position: absolute;
  left: 6px;
  top: 5px;
  width: 13px;
  height: 13px;
  border: 1px solid #888;
  border-radius: 50%;
  background-color: #222;
  font-size: 9px;
  line-height: 11px;
  text-align: center;
}
```
